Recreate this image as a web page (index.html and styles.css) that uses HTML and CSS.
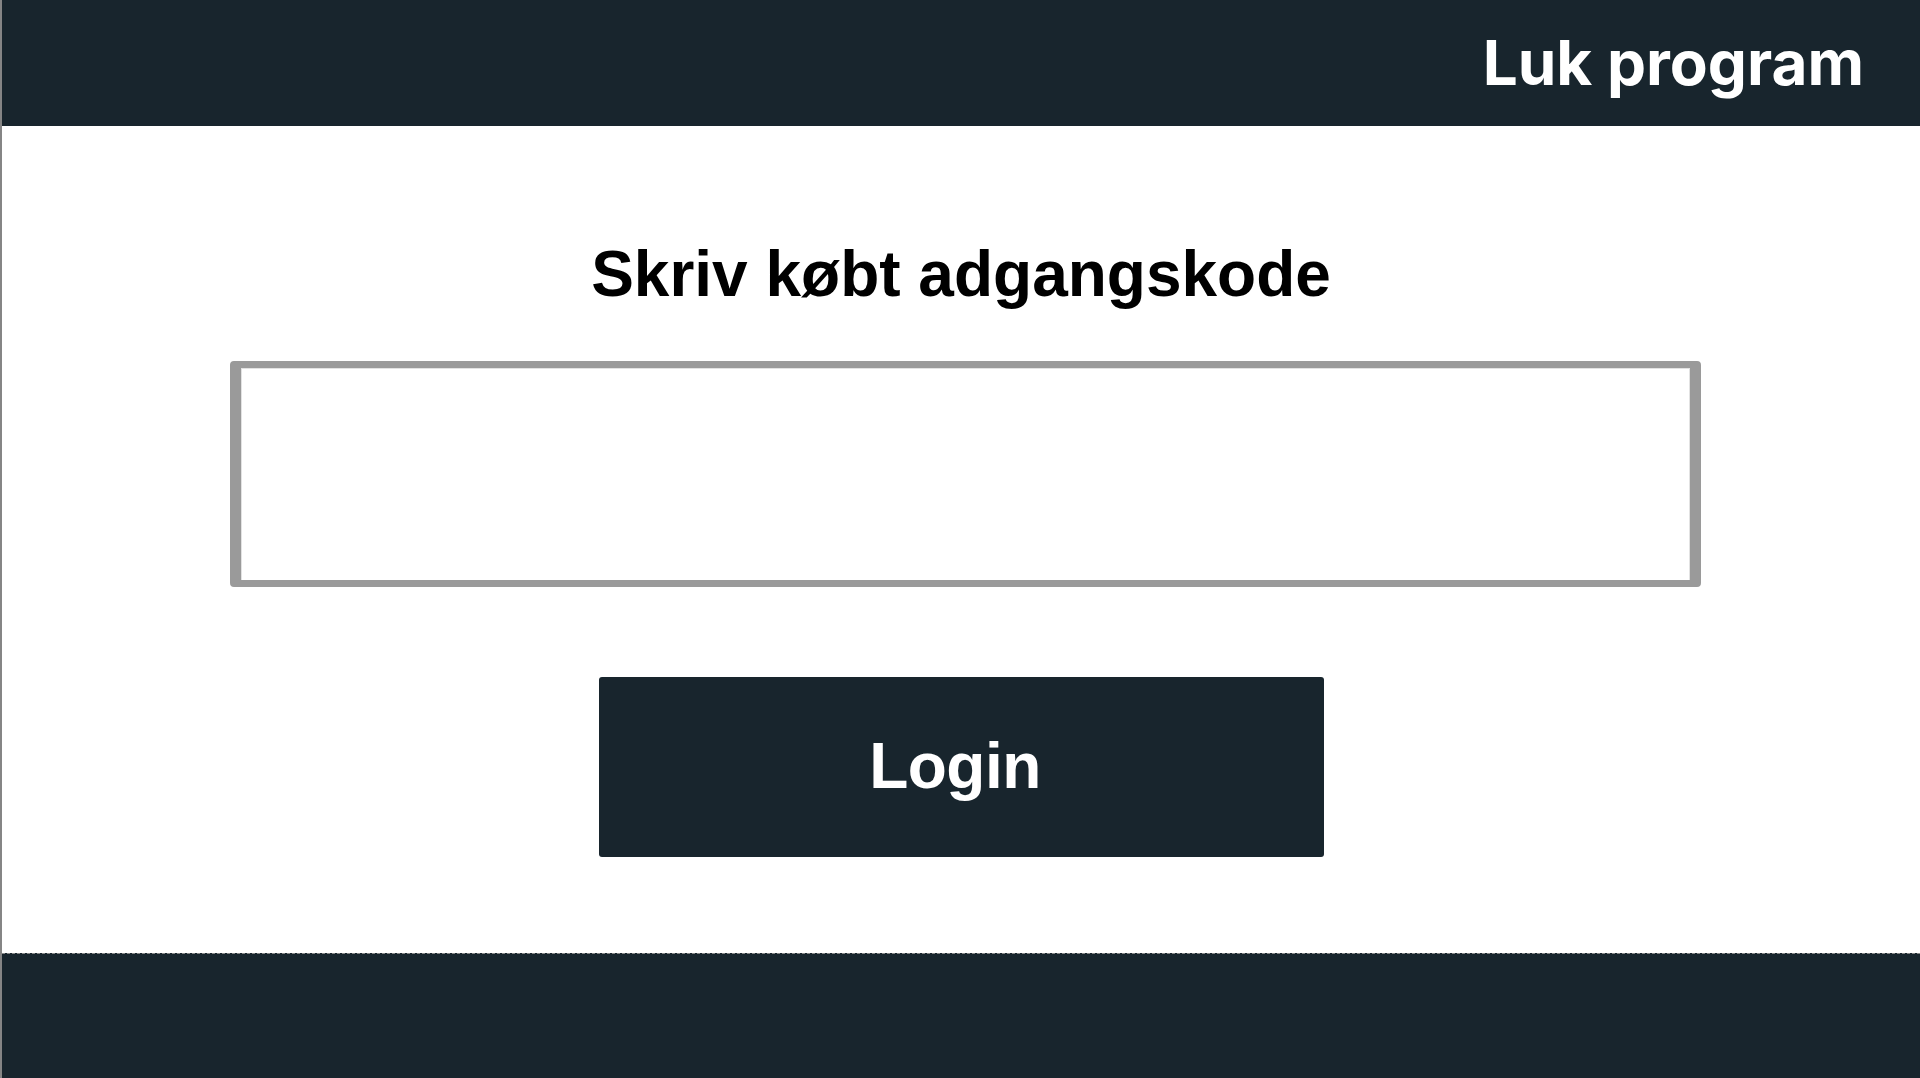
FILE: index.html
```html
<!DOCTYPE html>
<html lang="da">
<head>
<meta charset="utf-8">
<title>Login</title>
<link rel="stylesheet" href="styles.css">
</head>
<body>
<div class="app">
  <header class="topbar">
    <button class="close-btn" type="button">Luk program</button>
  </header>
  <main class="content">
    <h1 class="title">Skriv købt adgangskode</h1>
    <input class="code-input" type="text" aria-label="Adgangskode">
    <button class="login-btn" type="button">Login</button>
  </main>
  <footer class="bottombar"></footer>
</div>
</body>
</html>
```
FILE: styles.css
```css
html, body {
  margin: 0;
  padding: 0;
  height: 100%;
  background: #ffffff;
}

.app {
  height: 1078px;
  display: flex;
  flex-direction: column;
  border-left: 2px solid #858585;
  box-sizing: border-box;
}

.topbar {
  height: 126px;
  flex: 0 0 126px;
  background: #18252d;
  display: flex;
  align-items: center;
  justify-content: flex-end;
  padding-right: 56px;
}

.close-btn {
  background: none;
  border: 0;
  padding: 0;
  margin: 0;
  color: #ffffff;
  font-family: Inter, "Noto Sans", sans-serif;
  font-weight: 700;
  font-size: 62px;
  letter-spacing: 0;
  line-height: 1;
  cursor: pointer;
}

.content {
  flex: 1 1 auto;
  display: flex;
  flex-direction: column;
  align-items: center;
  background: #ffffff;
}

.title {
  margin: 112px 0 0 0;
  font-family: "Liberation Sans", Arial, sans-serif;
  font-weight: 700;
  font-size: 64px;
  line-height: 72px;
  color: #000000;
}

.code-input {
  align-self: flex-start;
  margin: 51px 0 0 228px;
  width: 1471px;
  height: 226px;
  box-sizing: border-box;
  border-style: solid;
  border-color: #9a9a9a;
  border-width: 7px 11px;
  border-radius: 4px;
  background: #ffffff;
  box-shadow: inset 1px 1px 0 #e2e2e2, inset -1px 0 0 #e2e2e2;
  outline: none;
  font-family: "Liberation Sans", Arial, sans-serif;
  font-size: 48px;
  padding: 0 20px;
}

.login-btn {
  margin-top: 90px;
  width: 725px;
  height: 180px;
  border: 0;
  border-radius: 3px;
  background: #18252d;
  color: #ffffff;
  font-family: "Liberation Sans", Arial, sans-serif;
  font-weight: 700;
  font-size: 64px;
  letter-spacing: -0.5px;
  display: flex;
  align-items: center;
  justify-content: center;
  padding: 0 12px 2px 0;
  cursor: pointer;
}

.bottombar {
  height: 125px;
  flex: 0 0 125px;
  box-sizing: border-box;
  background: #18252d;
  border-top: 1px dashed #8a8a8a;
}
```
